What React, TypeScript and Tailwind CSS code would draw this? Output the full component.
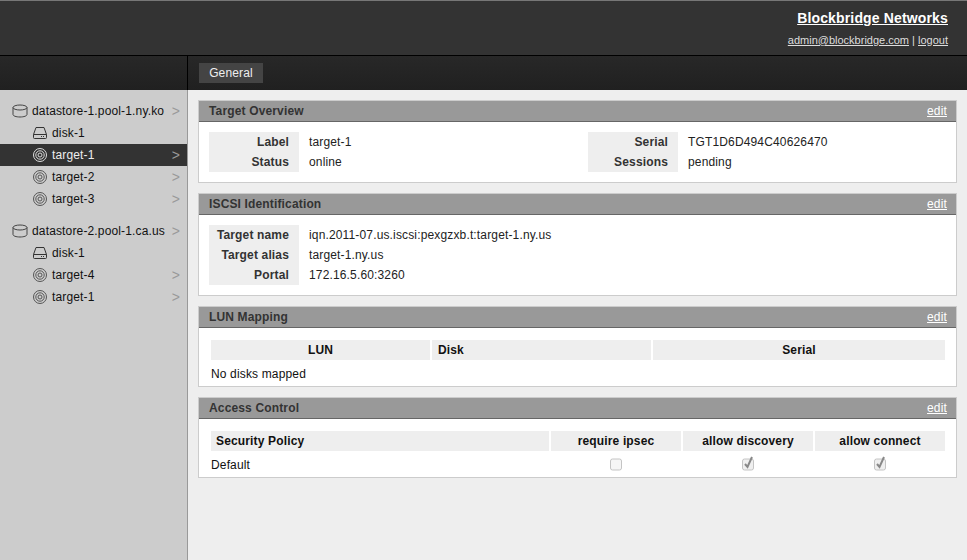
import React from 'react';

function DatastoreIcon() {
  return (
    <svg width="16" height="14" viewBox="0 0 16 14" fill="none" stroke="#444" strokeWidth="1" className="shrink-0">
      <ellipse cx="8" cy="3.5" rx="7" ry="2.5" />
      <path d="M1 3.5v7c0 1.4 3.1 2.5 7 2.5s7-1.1 7-2.5v-7" />
    </svg>
  );
}

function DiskIcon() {
  return (
    <svg width="14" height="12" viewBox="0 0 14 12" fill="none" stroke="#333" strokeWidth="1" className="shrink-0">
      <path d="M3 .5h8l2.5 7v3a1 1 0 0 1-1 1h-11a1 1 0 0 1-1-1v-3z" />
      <path d="M.5 7.5h13" />
      <path d="M8 9.5h4" strokeDasharray="1 1" />
    </svg>
  );
}

function TargetIcon({ light }: { light?: boolean }) {
  const c = light ? '#ddd' : '#555';
  return (
    <svg width="14" height="14" viewBox="0 0 14 14" fill="none" stroke={c} strokeWidth="1" className="shrink-0">
      <circle cx="7" cy="7" r="6.5" />
      <circle cx="7" cy="7" r="4.2" />
      <circle cx="7" cy="7" r="2" />
    </svg>
  );
}

function TreeRow({ icon, label, arrow = true, active }: { icon: 'disk' | 'target'; label: string; arrow?: boolean; active?: boolean }) {
  return (
    <div className={`flex h-[22px] items-center pl-[33px] pr-[7px] ${active ? 'bg-[#333] text-[#eee]' : 'text-[#111]'}`}>
      {icon === 'disk' ? <DiskIcon /> : <TargetIcon light={active} />}
      <span className="ml-[5px] flex-1">{label}</span>
      {arrow && <span className="text-[14px] text-[#999]">&gt;</span>}
    </div>
  );
}

function Datastore({ name }: { name: string }) {
  return (
    <div className="flex h-[22px] items-center pl-[12px] pr-[7px] text-[#111]">
      <DatastoreIcon />
      <span className="ml-[4px] flex-1">{name}</span>
      <span className="text-[14px] text-[#999]">&gt;</span>
    </div>
  );
}

function Panel({ title, children, className }: { title: string; children: React.ReactNode; className: string }) {
  return (
    <section className={`border border-[#ccc] bg-white ${className}`}>
      <div className="flex h-[21px] items-center justify-between border-b border-[#666] bg-[#999] pl-[10px] pr-[9px]">
        <span className="font-bold text-[#333]">{title}</span>
        <a className="text-white underline">edit</a>
      </div>
      {children}
    </section>
  );
}

function Kv({ rows, labelW }: { rows: [string, string][]; labelW: string }) {
  return (
    <div className="flex">
      <div className={`bg-[#eee] pr-[10px] text-right font-bold text-[#333] ${labelW}`}>
        {rows.map(([k]) => (
          <div key={k} className="h-[20px] leading-[20px]">{k}</div>
        ))}
      </div>
      <div className="pl-[10px] text-[#222]">
        {rows.map(([k, v]) => (
          <div key={k} className="h-[20px] leading-[20px]">{v}</div>
        ))}
      </div>
    </div>
  );
}

function Check({ checked }: { checked?: boolean }) {
  return (
    <svg width="14" height="15" viewBox="0 0 14 15" fill="none">
      <rect x="1.5" y="3" width="11" height="11" rx="2" fill={checked ? '#efefef' : '#f6f6f6'} stroke="#c4c4c4" />
      {checked && <path d="M4 8l2.5 3L11 1" stroke="#888" strokeWidth="2" />}
    </svg>
  );
}

const th = 'h-[20px] bg-[#eee] text-center font-bold leading-[20px] text-[#111]';

export default function App() {
  return (
    <div className="flex h-[560px] w-[967px] flex-col overflow-hidden bg-[#eee] font-['Liberation_Sans',Arial,sans-serif] text-[12px] tracking-[0.15px]">
      <header className="h-[56px] border-t border-b border-t-[#777] border-b-black bg-[#333] pr-[19px] pt-[8px] text-right">
        <div className="text-[14px] font-bold leading-[18px] text-white underline">Blockbridge Networks</div>
        <div className="mt-[6px] text-[11px] leading-[14px] tracking-normal text-[#ddd]">
          <a className="underline">admin@blockbridge.com</a> | <a className="underline">logout</a>
        </div>
      </header>
      <nav className="flex h-[34px] bg-gradient-to-b from-[#282828] to-[#202020]">
        <div className="w-[188px] border-r border-black" />
        <div className="ml-[11px] mt-[7px] h-[20px] w-[64px] bg-[#444] text-center leading-[20px] text-[#eee]">General</div>
      </nav>
      <div className="flex flex-1">
        <aside className="w-[188px] border-r border-[#999] bg-[#ccc] pt-[10px]">
          <Datastore name="datastore-1.pool-1.ny.ko" />
          <TreeRow icon="disk" label="disk-1" arrow={false} />
          <TreeRow icon="target" label="target-1" active />
          <TreeRow icon="target" label="target-2" />
          <TreeRow icon="target" label="target-3" />
          <div className="h-[10px]" />
          <Datastore name="datastore-2.pool-1.ca.us" />
          <TreeRow icon="disk" label="disk-1" arrow={false} />
          <TreeRow icon="target" label="target-4" />
          <TreeRow icon="target" label="target-1" />
        </aside>
        <main className="flex flex-1 flex-col gap-[10px] px-[10px] pt-[10px]">
          <Panel title="Target Overview" className="h-[83px]">
            <div className="grid grid-cols-[379px_1fr] pl-[10px] pt-[10px]">
              <Kv labelW="w-[90px]" rows={[['Label', 'target-1'], ['Status', 'online']]} />
              <Kv labelW="w-[90px]" rows={[['Serial', 'TGT1D6D494C40626470'], ['Sessions', 'pending']]} />
            </div>
          </Panel>
          <Panel title="ISCSI Identification" className="h-[103px]">
            <div className="pl-[10px] pt-[10px]">
              <Kv
                labelW="w-[90px]"
                rows={[['Target name', 'iqn.2011-07.us.iscsi:pexgzxb.t:target-1.ny.us'], ['Target alias', 'target-1.ny.us'], ['Portal', '172.16.5.60:3260']]}
              />
            </div>
          </Panel>
          <Panel title="LUN Mapping" className="h-[81px]">
            <div className="pl-[12px] pr-[11px] pt-[12px]">
              <div className="grid grid-cols-[219px_219px_1fr] gap-x-[2px]">
                <div className={th}>LUN</div>
                <div className={`${th} pl-[6px] !text-left`}>Disk</div>
                <div className={th}>Serial</div>
              </div>
              <div className="mt-[6px] leading-[16px] text-[#111]">No disks mapped</div>
            </div>
          </Panel>
          <Panel title="Access Control" className="h-[81px]">
            <div className="pl-[12px] pr-[11px] pt-[12px]">
              <div className="grid grid-cols-[338px_130px_130px_1fr] gap-x-[2px]">
                <div className={`${th} pl-[5px] !text-left`}>Security Policy</div>
                <div className={th}>require ipsec</div>
                <div className={th}>allow discovery</div>
                <div className={th}>allow connect</div>
              </div>
              <div className="grid h-[24px] grid-cols-[338px_130px_130px_1fr] items-center gap-x-[2px] text-[#111]">
                <div className="mt-[4px]">Default</div>
                <div className="flex justify-center"><Check /></div>
                <div className="flex justify-center"><Check checked /></div>
                <div className="flex justify-center"><Check checked /></div>
              </div>
            </div>
          </Panel>
        </main>
      </div>
    </div>
  );
}
